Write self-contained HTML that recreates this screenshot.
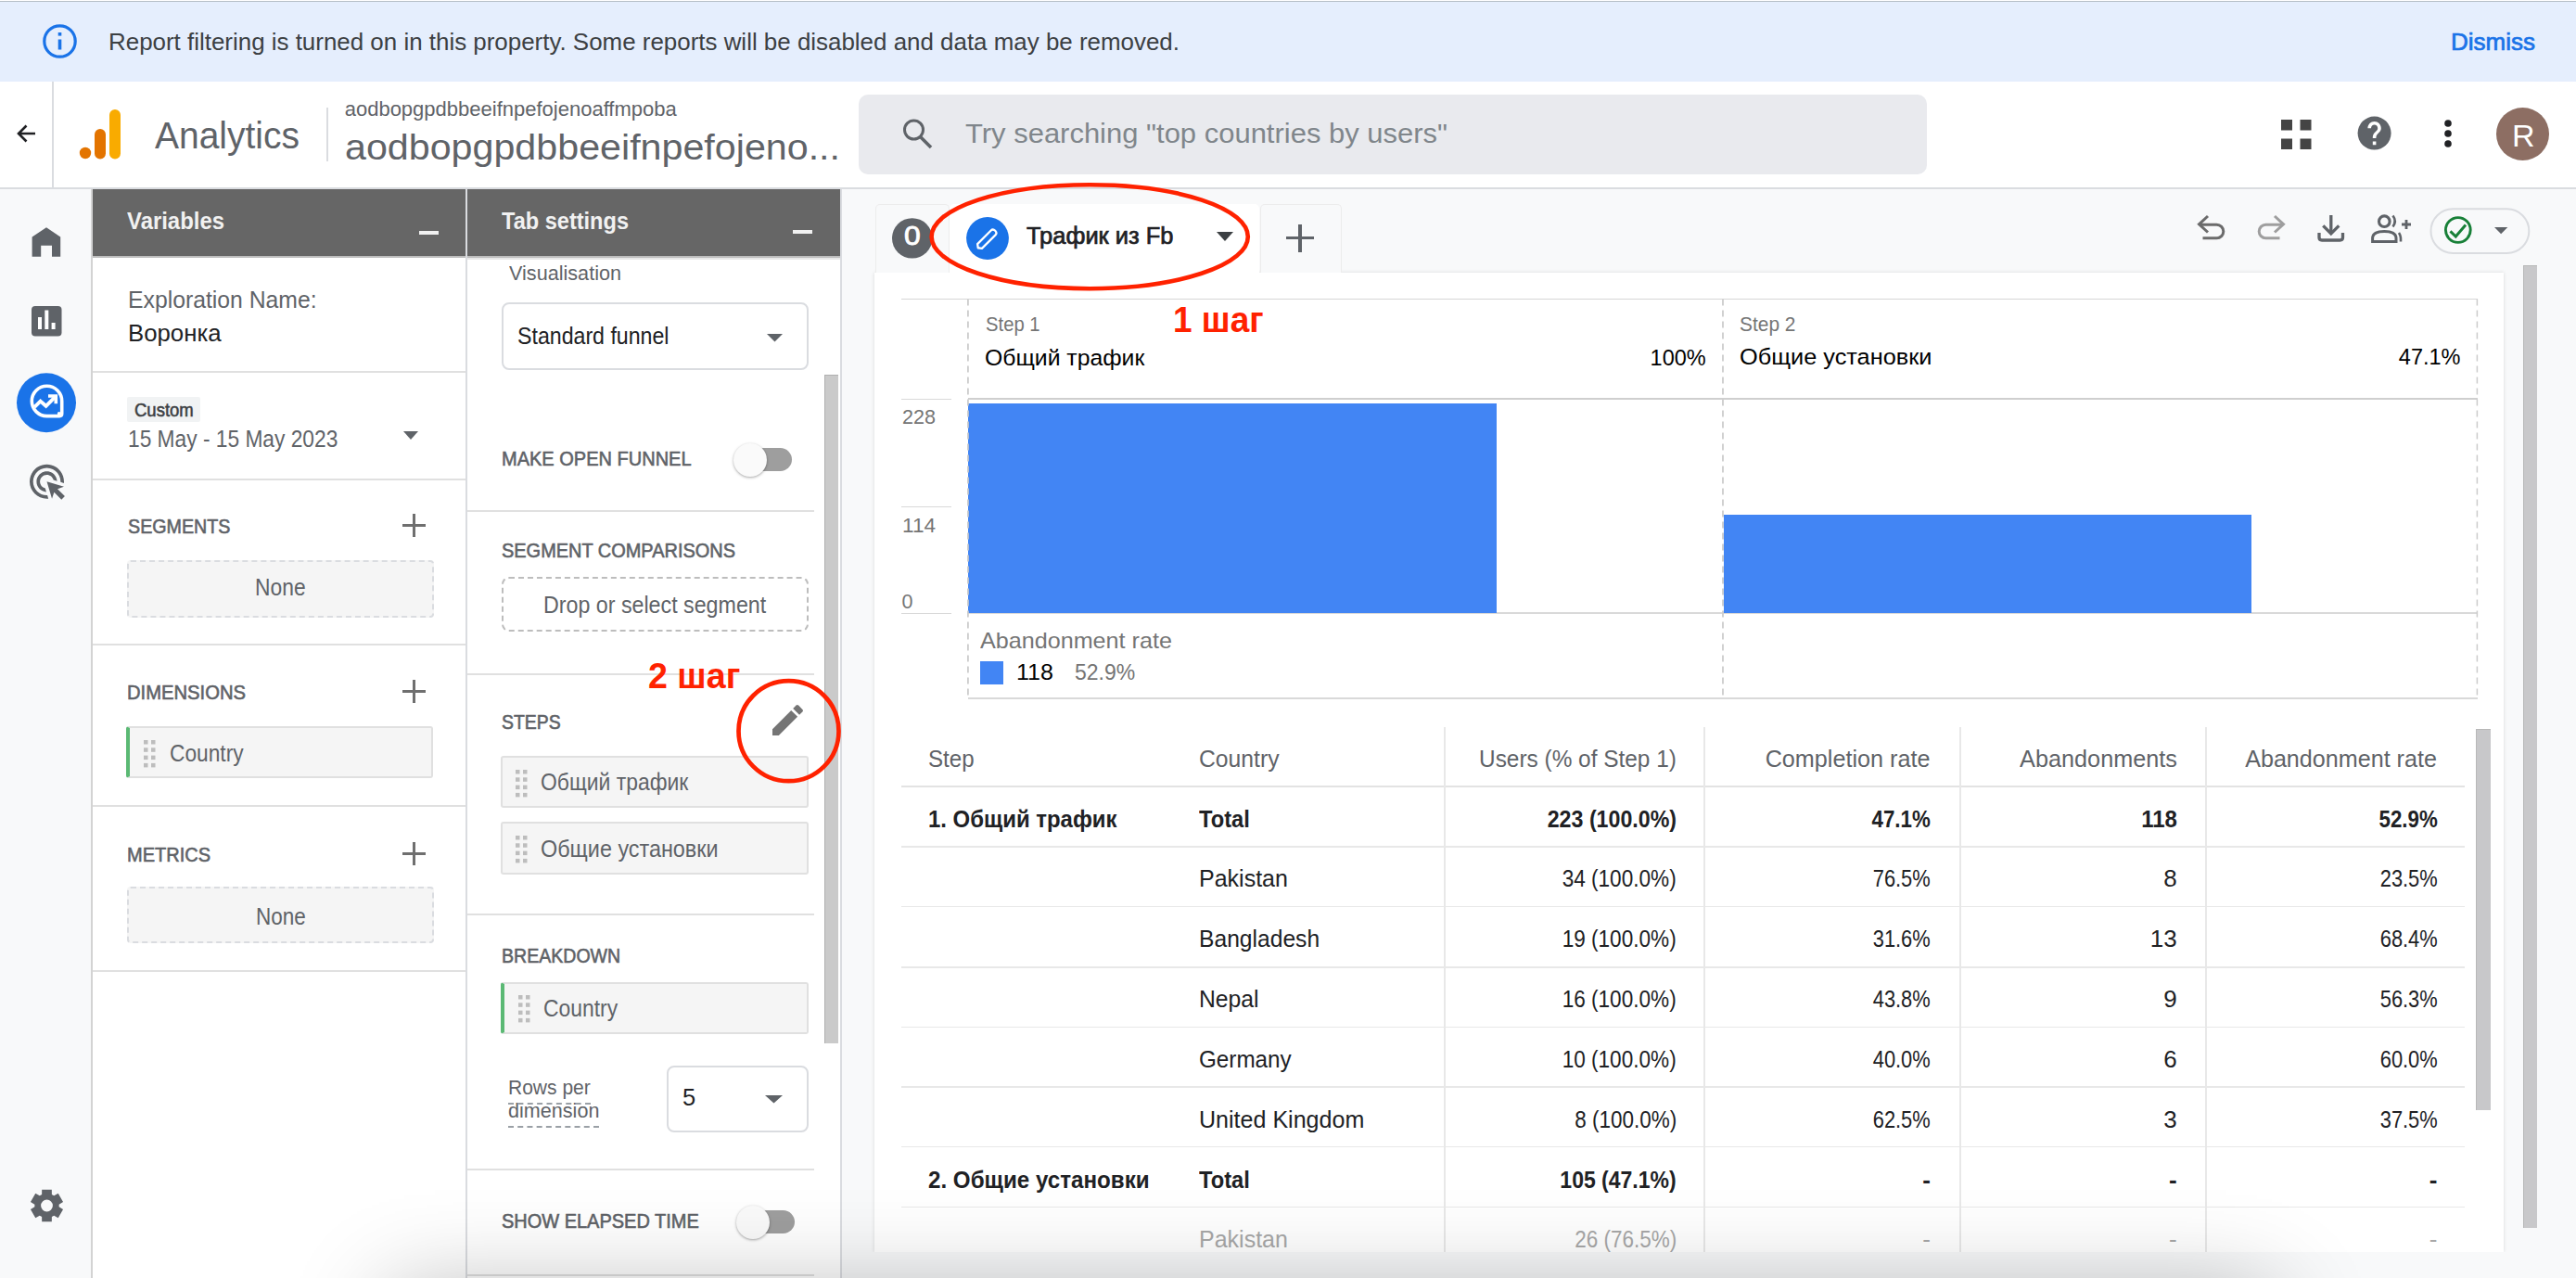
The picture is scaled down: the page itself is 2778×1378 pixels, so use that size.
<!DOCTYPE html>
<html><head><meta charset="utf-8"><style>
html,body{margin:0;padding:0;}
body{width:2778px;height:1378px;position:relative;overflow:hidden;background:#ffffff;font-family:"Liberation Sans", sans-serif;}
span{font-family:"Liberation Sans", sans-serif;}
</style></head><body>
<div style="position:absolute;left:0px;top:0px;width:2778px;height:88px;background:#e5eefd;"></div><div style="position:absolute;left:0px;top:0px;width:2778px;height:1px;background:#ffffff;"></div><div style="position:absolute;left:0px;top:1px;width:2778px;height:1.2px;background:#b5bec7;"></div><div style="position:absolute;left:0px;top:88px;width:2778px;height:114px;background:#ffffff;"></div><div style="position:absolute;left:0px;top:202px;width:2778px;height:2px;background:#dadce0;"></div><div style="position:absolute;left:56px;top:88px;width:2px;height:114px;background:#dadce0;"></div><div style="position:absolute;left:0px;top:204px;width:98px;height:1174px;background:#f8f9fa;"></div><div style="position:absolute;left:98px;top:204px;width:2px;height:1174px;background:#d3d3d3;"></div><div style="position:absolute;left:100px;top:204px;width:402px;height:1174px;background:#ffffff;"></div><div style="position:absolute;left:100px;top:204px;width:402px;height:72px;background:#666666;"></div><div style="position:absolute;left:100px;top:276px;width:402px;height:2px;background:#bebebe;"></div><div style="position:absolute;left:502px;top:204px;width:2px;height:1174px;background:#dadce0;"></div><div style="position:absolute;left:504px;top:204px;width:402px;height:1174px;background:#ffffff;"></div><div style="position:absolute;left:504px;top:204px;width:402px;height:72px;background:#666666;"></div><div style="position:absolute;left:504px;top:276px;width:402px;height:2px;background:#bebebe;"></div><div style="position:absolute;left:504px;top:278px;width:402px;height:1.5px;background:#e8e8e8;"></div><div style="position:absolute;left:906px;top:204px;width:2px;height:1174px;background:#dadce0;"></div><div style="position:absolute;left:908px;top:204px;width:1870px;height:1174px;background:#f8f9fa;"></div><div style="position:absolute;left:943px;top:294px;width:1757px;height:1056px;background:#ffffff;box-shadow:0 0 4px rgba(0,0,0,0.13);clip-path:inset(-10px -10px 0 -10px);"></div><svg style="position:absolute;left:46px;top:26px;overflow:visible" width="37" height="37" viewBox="0 0 37 37"><circle cx="18.5" cy="18.5" r="16.7" fill="none" stroke="#1a73e8" stroke-width="3.2"/><rect x="16.7" y="9" width="3.6" height="3.6" fill="#1a73e8"/><rect x="16.7" y="16.5" width="3.6" height="11" fill="#1a73e8"/></svg><span id="t0" style="position:absolute;left:117px;top:30.77px;font-size:26px;line-height:29.042px;color:#3c4043;font-weight:400;white-space:nowrap;transform:scaleX(0.9969);transform-origin:left top;">Report filtering is turned on in this property. Some reports will be disabled and data may be removed.</span><span id="t1" style="position:absolute;right:44px;top:30.87px;font-size:26px;line-height:29.042px;color:#1a73e8;font-weight:400;white-space:nowrap;-webkit-text-stroke:0.73px #1a73e8;">Dismiss</span><svg style="position:absolute;left:17px;top:133px;overflow:visible" width="22" height="22" viewBox="0 0 22 22"><path d="M21 11H3.5M11.5 2.5L3 11l8.5 8.5" fill="none" stroke="#202124" stroke-width="2.6"/></svg><svg style="position:absolute;left:85px;top:117px;overflow:visible" width="46" height="55" viewBox="0 0 46 55"><circle cx="7" cy="48" r="6.2" fill="#e37400"/><rect x="17" y="22" width="12" height="32.5" rx="6" fill="#e37400"/><rect x="33" y="1" width="12" height="53.5" rx="6" fill="#f9ab00"/></svg><span id="t2" style="position:absolute;left:166.6px;top:123.8px;font-size:40px;line-height:44.68px;color:#5f6368;font-weight:400;white-space:nowrap;transform:scaleX(0.9746);transform-origin:left top;">Analytics</span><div style="position:absolute;left:352px;top:116px;width:2px;height:58px;background:#dadce0;"></div><span id="t3" style="position:absolute;left:371.7px;top:106.09px;font-size:22px;line-height:24.574px;color:#5f6368;font-weight:400;white-space:nowrap;">aodbopgpdbbeeifnpefojenoaffmpoba</span><span id="t4" style="position:absolute;left:371.7px;top:137.61px;font-size:38px;line-height:42.446px;color:#5f6368;font-weight:400;white-space:nowrap;transform:scaleX(1.0846);transform-origin:left top;">aodbopgpdbbeeifnpefojeno...</span><div style="position:absolute;left:926px;top:102px;width:1152px;height:86px;background:#e9eaee;border-radius:10px;"></div><svg style="position:absolute;left:970px;top:126px;overflow:visible" width="38" height="38" viewBox="0 0 38 38"><circle cx="15.5" cy="14" r="10" fill="none" stroke="#5f6368" stroke-width="3"/><path d="M22.5 21.5L34 33" stroke="#5f6368" stroke-width="3.5"/></svg><span id="t5" style="position:absolute;left:1041px;top:127.15px;font-size:30px;line-height:33.51px;color:#80868b;font-weight:400;white-space:nowrap;transform:scaleX(1.0323);transform-origin:left top;">Try searching "top countries by users"</span><svg style="position:absolute;left:2460px;top:129px;overflow:visible" width="33" height="33" viewBox="0 0 33 33"><rect x="0" y="0" width="12" height="11.5" fill="#444"/><rect x="20.5" y="0" width="12" height="11.5" fill="#444"/><rect x="0" y="20.5" width="12" height="11.5" fill="#444"/><rect x="20.5" y="20.5" width="12" height="11.5" fill="#444"/></svg><svg style="position:absolute;left:2539.4px;top:122.4px;overflow:visible" width="43.2" height="43.2" viewBox="0 0 43.2 43.2"><g transform="scale(1.8)"><circle cx="12" cy="12" r="10" fill="#5f6368"/><path d="M13 19h-2v-2h2v2zm2.07-7.75l-.9.92C13.45 12.9 13 13.5 13 15h-2v-.5c0-1.1.45-2.1 1.17-2.83l1.24-1.26c.37-.36.59-.86.59-1.41 0-1.1-.9-2-2-2s-2 .9-2 2H8c0-2.21 1.79-4 4-4s4 1.79 4 4c0 .88-.36 1.68-.93 2.25z" fill="#fff"/></g></svg><svg style="position:absolute;left:2633px;top:129px;overflow:visible" width="14" height="32" viewBox="0 0 14 32"><circle cx="7" cy="4" r="3.8" fill="#202124"/><circle cx="7" cy="15" r="3.8" fill="#202124"/><circle cx="7" cy="26" r="3.8" fill="#202124"/></svg><div style="position:absolute;left:2691.5px;top:116px;width:57px;height:57px;background:#8d6e63;border-radius:50%;"></div><span id="t6" style="position:absolute;left:2720px;top:127.23px;font-size:34px;line-height:37.978px;color:#ffffff;font-weight:400;white-space:nowrap;margin-left:-11px;">R</span><svg style="position:absolute;left:0px;top:0px;overflow:visible" width="98" height="1378" viewBox="0 0 98 1378"><path d="M50 245.3 L65.2 255.6 L65.2 276.7 L56 276.7 L56 264.7 L44.2 264.7 L44.2 276.7 L34.6 276.7 L34.6 255.6 Z" fill="#5f6368"/><rect x="34" y="330" width="32.5" height="32.4" rx="4" fill="#5f6368"/><rect x="41" y="342" width="4" height="13" fill="#fff"/><rect x="48.3" y="334.5" width="4" height="20.5" fill="#fff"/><rect x="55.6" y="348" width="4" height="7" fill="#fff"/><circle cx="50" cy="434.2" r="32" fill="#1a73e8"/><path d="M50.5 448.6 A16.2 16.2 0 1 1 66.7 432.4 L66.7 446.1 Q66.7 448.6 64.2 448.6 Z" fill="none" stroke="#fff" stroke-width="3.6"/><path d="M37.3 438.8 L43.6 432.6 L49.6 437.8 L59.3 428.1" fill="none" stroke="#fff" stroke-width="3.8"/><path d="M52 427 L60.3 427 L60.3 435.2" fill="none" stroke="#fff" stroke-width="3.6"/><circle cx="63.7" cy="445.9" r="1.9" fill="#fff"/><g transform="translate(28.3 497.1) scale(1.85)"><path d="M11.71,17.99C8.53,17.84,6,15.22,6,12c0-3.31,2.69-6,6-6c3.22,0,5.84,2.53,5.99,5.71l-2.1-0.63C15.48,9.31,13.89,8,12,8 c-2.21,0-4,1.79-4,4c0,1.89,1.31,3.48,3.08,3.89L11.71,17.99z M22,12c0,0.3-0.01,0.6-0.04,0.9l-1.97-0.59C20,12.21,20,12.1,20,12 c0-4.42-3.580-8-8-8s-8,3.58-8,8s3.58,8,8,8c0.1,0,0.21,0,0.31-0.01l0.59,1.97C12.6,21.99,12.3,22,12,22C6.48,22,2,17.52,2,12 C2,6.48,6.48,2,12,2S22,6.48,22,12z M18.23,16.26L22,15l-10-3l3,10l1.26-3.77l4.27,4.27l1.97-1.97L18.23,16.26z" fill="#5f6368"/></g><path d="M45.12 1287.95 L45.18 1282.80 L55.82 1282.80 L55.88 1287.95 L58.25 1289.31 L62.73 1286.80 L68.05 1296.01 L63.63 1298.63 L63.63 1301.37 L68.05 1303.99 L62.73 1313.20 L58.25 1310.69 L55.88 1312.05 L55.82 1317.20 L45.18 1317.20 L45.12 1312.05 L42.75 1310.69 L38.27 1313.20 L32.95 1303.99 L37.37 1301.37 L37.37 1298.63 L32.95 1296.01 L38.27 1286.80 L42.75 1289.31 Z M56.90 1300.00 A6.4 6.4 0 1 0 44.10 1300.00 A6.4 6.4 0 1 0 56.90 1300.00 Z" fill="#5f6368" fill-rule="evenodd"/></svg><span id="t7" style="position:absolute;left:137.4px;top:225.375px;font-size:25px;line-height:27.925px;color:#f1f1f1;font-weight:700;white-space:nowrap;transform:scaleX(0.9562);transform-origin:left top;">Variables</span><div style="position:absolute;left:452px;top:249px;width:21px;height:4px;background:#f1f1f1;"></div><span id="t8" style="position:absolute;left:137.8px;top:308.97px;font-size:26px;line-height:29.042px;color:#5f6368;font-weight:400;white-space:nowrap;transform:scaleX(0.9519);transform-origin:left top;">Exploration Name:</span><span id="t9" style="position:absolute;left:137.8px;top:345.223px;font-size:25.5px;line-height:28.483px;color:#202124;font-weight:400;white-space:nowrap;transform:scaleX(1.0106);transform-origin:left top;">Воронка</span><div style="position:absolute;left:100px;top:400px;width:402px;height:2px;background:#e0e0e0;"></div><div style="position:absolute;left:136.5px;top:428px;width:79px;height:27px;background:#f1f3f4;border-radius:2px;"></div><span id="t10" style="position:absolute;left:144.5px;top:430.5px;font-size:20px;line-height:22.34px;color:#3c4043;font-weight:400;white-space:nowrap;-webkit-text-stroke:0.56px #3c4043;transform:scaleX(0.9259);transform-origin:left top;">Custom</span><span id="t11" style="position:absolute;left:137.7px;top:459.875px;font-size:25px;line-height:27.925px;color:#5f6368;font-weight:400;white-space:nowrap;transform:scaleX(0.9097);transform-origin:left top;">15 May - 15 May 2023</span><svg style="position:absolute;left:435px;top:465px;overflow:visible" width="16" height="9" viewBox="0 0 16 9"><path d="M0 0 L16 0 L8 9 Z" fill="#5f6368"/></svg><div style="position:absolute;left:100px;top:516px;width:402px;height:2px;background:#e0e0e0;"></div><span id="t12" style="position:absolute;left:137.7px;top:556.39px;font-size:22px;line-height:24.574px;color:#5f6368;font-weight:400;white-space:nowrap;-webkit-text-stroke:0.62px #5f6368;transform:scaleX(0.8950);transform-origin:left top;">SEGMENTS</span><div style="position:absolute;left:433.9px;top:565.0px;width:25px;height:3.0px;background:#6f6f6f;"></div><div style="position:absolute;left:444.9px;top:554.0px;width:3.0px;height:25px;background:#6f6f6f;"></div><div style="position:absolute;left:136.5px;top:604px;width:331px;height:62px;background:#f5f5f5;border:2px dashed #dadce0;border-radius:4px;box-sizing:border-box;"></div><span id="t13" style="position:absolute;left:275px;top:618.923px;font-size:25.5px;line-height:28.483px;color:#5f6368;font-weight:400;white-space:nowrap;transform:scaleX(0.8955);transform-origin:left top;">None</span><div style="position:absolute;left:100px;top:694px;width:402px;height:2px;background:#e0e0e0;"></div><span id="t14" style="position:absolute;left:137px;top:734.69px;font-size:22px;line-height:24.574px;color:#5f6368;font-weight:400;white-space:nowrap;-webkit-text-stroke:0.62px #5f6368;transform:scaleX(0.9185);transform-origin:left top;">DIMENSIONS</span><div style="position:absolute;left:433.5px;top:743.5px;width:25px;height:3.0px;background:#6f6f6f;"></div><div style="position:absolute;left:444.5px;top:732.5px;width:3.0px;height:25px;background:#6f6f6f;"></div><div style="position:absolute;left:136px;top:782.6px;width:331px;height:56.4px;background:#f5f5f5;border:2px solid #e0e0e0;border-left:4px solid #5bb974;border-radius:3px;box-sizing:border-box;"></div><svg style="position:absolute;left:155px;top:797.6px;overflow:visible" width="13" height="30" viewBox="0 0 13 30"><rect x="0" y="0.0" width="4.5" height="4.5" fill="#bdbdbd"/><rect x="8" y="0.0" width="4.5" height="4.5" fill="#bdbdbd"/><rect x="0" y="8.3" width="4.5" height="4.5" fill="#bdbdbd"/><rect x="8" y="8.3" width="4.5" height="4.5" fill="#bdbdbd"/><rect x="0" y="16.6" width="4.5" height="4.5" fill="#bdbdbd"/><rect x="8" y="16.6" width="4.5" height="4.5" fill="#bdbdbd"/><rect x="0" y="24.900000000000002" width="4.5" height="4.5" fill="#bdbdbd"/><rect x="8" y="24.900000000000002" width="4.5" height="4.5" fill="#bdbdbd"/></svg><span id="t15" style="position:absolute;left:183px;top:797.722px;font-size:25.5px;line-height:28.483px;color:#5f6368;font-weight:400;white-space:nowrap;transform:scaleX(0.8914);transform-origin:left top;">Country</span><div style="position:absolute;left:100px;top:868px;width:402px;height:2px;background:#e0e0e0;"></div><span id="t16" style="position:absolute;left:137px;top:909.59px;font-size:22px;line-height:24.574px;color:#5f6368;font-weight:400;white-space:nowrap;-webkit-text-stroke:0.62px #5f6368;transform:scaleX(0.9091);transform-origin:left top;">METRICS</span><div style="position:absolute;left:433.5px;top:919.0px;width:25px;height:3.0px;background:#6f6f6f;"></div><div style="position:absolute;left:444.5px;top:908.0px;width:3.0px;height:25px;background:#6f6f6f;"></div><div style="position:absolute;left:136.5px;top:956px;width:331px;height:61px;background:#f5f5f5;border:2px dashed #dadce0;border-radius:4px;box-sizing:border-box;"></div><span id="t17" style="position:absolute;left:275.6px;top:973.722px;font-size:25.5px;line-height:28.483px;color:#5f6368;font-weight:400;white-space:nowrap;transform:scaleX(0.8824);transform-origin:left top;">None</span><div style="position:absolute;left:100px;top:1045.5px;width:402px;height:2px;background:#e0e0e0;"></div><span id="t18" style="position:absolute;left:541px;top:225.175px;font-size:25px;line-height:27.925px;color:#f1f1f1;font-weight:700;white-space:nowrap;transform:scaleX(0.9423);transform-origin:left top;">Tab settings</span><div style="position:absolute;left:855px;top:248px;width:21px;height:4px;background:#f1f1f1;"></div><span id="t19" style="position:absolute;left:548.6px;top:282.137px;font-size:22.5px;line-height:25.133px;color:#5f6368;font-weight:400;white-space:nowrap;transform:scaleX(0.9609);transform-origin:left top;">Visualisation</span><div style="position:absolute;left:540.7px;top:326.4px;width:331px;height:72.6px;background:#fff;border:2px solid #dadce0;border-radius:8px;box-sizing:border-box;"></div><span id="t20" style="position:absolute;left:557.8px;top:347.623px;font-size:25.5px;line-height:28.483px;color:#202124;font-weight:400;white-space:nowrap;transform:scaleX(0.9080);transform-origin:left top;">Standard funnel</span><svg style="position:absolute;left:827px;top:359.5px;overflow:visible" width="17" height="8.5" viewBox="0 0 17 8.5"><path d="M0 0 L17 0 L8.5 8.5 Z" fill="#5f6368"/></svg><div style="position:absolute;left:889px;top:404.2px;width:15px;height:721px;background:#cacaca;border-left:1.5px solid #b0b0b0;border-top:1.5px solid #b0b0b0;box-sizing:border-box;"></div><span id="t21" style="position:absolute;left:540.7px;top:483.09px;font-size:22px;line-height:24.574px;color:#5f6368;font-weight:400;white-space:nowrap;-webkit-text-stroke:0.62px #5f6368;transform:scaleX(0.9096);transform-origin:left top;">MAKE OPEN FUNNEL</span><div style="position:absolute;left:805px;top:483px;width:49px;height:25px;background:#9e9e9e;border-radius:13px;"></div><div style="position:absolute;left:791px;top:477.5px;width:36px;height:36px;background:#fafafa;border-radius:50%;box-shadow:0 1px 3px rgba(0,0,0,0.35);"></div><div style="position:absolute;left:504px;top:550px;width:374px;height:2px;background:#e0e0e0;"></div><span id="t22" style="position:absolute;left:541px;top:582.09px;font-size:22px;line-height:24.574px;color:#5f6368;font-weight:400;white-space:nowrap;-webkit-text-stroke:0.62px #5f6368;transform:scaleX(0.9068);transform-origin:left top;">SEGMENT COMPARISONS</span><div style="position:absolute;left:540.7px;top:622px;width:331px;height:58.6px;background:#fff;border:2px dashed #bdbdbd;border-radius:8px;box-sizing:border-box;"></div><span id="t23" style="position:absolute;left:585.7px;top:637.623px;font-size:25.5px;line-height:28.483px;color:#5f6368;font-weight:400;white-space:nowrap;transform:scaleX(0.9111);transform-origin:left top;">Drop or select segment</span><div style="position:absolute;left:504px;top:726px;width:374px;height:2px;background:#e0e0e0;"></div><span id="t24" style="position:absolute;left:541px;top:766.99px;font-size:22px;line-height:24.574px;color:#5f6368;font-weight:400;white-space:nowrap;-webkit-text-stroke:0.62px #5f6368;transform:scaleX(0.8816);transform-origin:left top;">STEPS</span><div style="position:absolute;left:540px;top:814.9px;width:331.6px;height:56.5px;background:#f5f5f5;border:2px solid #e0e0e0;border-radius:3px;box-sizing:border-box;"></div><svg style="position:absolute;left:555.5px;top:829.5px;overflow:visible" width="13" height="30" viewBox="0 0 13 30"><rect x="0" y="0.0" width="4.5" height="4.5" fill="#bdbdbd"/><rect x="8" y="0.0" width="4.5" height="4.5" fill="#bdbdbd"/><rect x="0" y="8.3" width="4.5" height="4.5" fill="#bdbdbd"/><rect x="8" y="8.3" width="4.5" height="4.5" fill="#bdbdbd"/><rect x="0" y="16.6" width="4.5" height="4.5" fill="#bdbdbd"/><rect x="8" y="16.6" width="4.5" height="4.5" fill="#bdbdbd"/><rect x="0" y="24.900000000000002" width="4.5" height="4.5" fill="#bdbdbd"/><rect x="8" y="24.900000000000002" width="4.5" height="4.5" fill="#bdbdbd"/></svg><span id="t25" style="position:absolute;left:582.6px;top:829.423px;font-size:25.5px;line-height:28.483px;color:#5f6368;font-weight:400;white-space:nowrap;transform:scaleX(0.8979);transform-origin:left top;">Общий трафик</span><div style="position:absolute;left:540px;top:886.4px;width:331.6px;height:56.6px;background:#f5f5f5;border:2px solid #e0e0e0;border-radius:3px;box-sizing:border-box;"></div><svg style="position:absolute;left:555.5px;top:901px;overflow:visible" width="13" height="30" viewBox="0 0 13 30"><rect x="0" y="0.0" width="4.5" height="4.5" fill="#bdbdbd"/><rect x="8" y="0.0" width="4.5" height="4.5" fill="#bdbdbd"/><rect x="0" y="8.3" width="4.5" height="4.5" fill="#bdbdbd"/><rect x="8" y="8.3" width="4.5" height="4.5" fill="#bdbdbd"/><rect x="0" y="16.6" width="4.5" height="4.5" fill="#bdbdbd"/><rect x="8" y="16.6" width="4.5" height="4.5" fill="#bdbdbd"/><rect x="0" y="24.900000000000002" width="4.5" height="4.5" fill="#bdbdbd"/><rect x="8" y="24.900000000000002" width="4.5" height="4.5" fill="#bdbdbd"/></svg><span id="t26" style="position:absolute;left:582.6px;top:900.923px;font-size:25.5px;line-height:28.483px;color:#5f6368;font-weight:400;white-space:nowrap;transform:scaleX(0.9170);transform-origin:left top;">Общие установки</span><div style="position:absolute;left:504px;top:985px;width:374px;height:2px;background:#e0e0e0;"></div><span id="t27" style="position:absolute;left:541px;top:1018.89px;font-size:22px;line-height:24.574px;color:#5f6368;font-weight:400;white-space:nowrap;-webkit-text-stroke:0.62px #5f6368;transform:scaleX(0.8887);transform-origin:left top;">BREAKDOWN</span><div style="position:absolute;left:540px;top:1058.7px;width:331.6px;height:56.5px;background:#f5f5f5;border:2px solid #e0e0e0;border-left:4px solid #5bb974;border-radius:3px;box-sizing:border-box;"></div><svg style="position:absolute;left:558.5px;top:1073px;overflow:visible" width="13" height="30" viewBox="0 0 13 30"><rect x="0" y="0.0" width="4.5" height="4.5" fill="#bdbdbd"/><rect x="8" y="0.0" width="4.5" height="4.5" fill="#bdbdbd"/><rect x="0" y="8.3" width="4.5" height="4.5" fill="#bdbdbd"/><rect x="8" y="8.3" width="4.5" height="4.5" fill="#bdbdbd"/><rect x="0" y="16.6" width="4.5" height="4.5" fill="#bdbdbd"/><rect x="8" y="16.6" width="4.5" height="4.5" fill="#bdbdbd"/><rect x="0" y="24.900000000000002" width="4.5" height="4.5" fill="#bdbdbd"/><rect x="8" y="24.900000000000002" width="4.5" height="4.5" fill="#bdbdbd"/></svg><span id="t28" style="position:absolute;left:585.8px;top:1073.322px;font-size:25.5px;line-height:28.483px;color:#5f6368;font-weight:400;white-space:nowrap;transform:scaleX(0.8981);transform-origin:left top;">Country</span><span id="t29" style="position:absolute;left:547.6px;top:1160.438px;font-size:22.5px;line-height:25.133px;color:#5f6368;font-weight:400;white-space:nowrap;transform:scaleX(0.9343);transform-origin:left top;">Rows per</span><span id="t30" style="position:absolute;left:547.6px;top:1185.237px;font-size:22.5px;line-height:25.133px;color:#5f6368;font-weight:400;white-space:nowrap;transform:scaleX(0.9594);transform-origin:left top;">dimension</span><div style="position:absolute;left:547.6px;top:1189px;width:89px;height:0px;border-top:2px dashed #9aa0a6;"></div><div style="position:absolute;left:547.6px;top:1214px;width:98.4px;height:0px;border-top:2px dashed #9aa0a6;"></div><div style="position:absolute;left:718.7px;top:1148.6px;width:153px;height:72.6px;background:#fff;border:2px solid #dadce0;border-radius:8px;box-sizing:border-box;"></div><span id="t31" style="position:absolute;left:736px;top:1168.522px;font-size:25.5px;line-height:28.483px;color:#202124;font-weight:400;white-space:nowrap;">5</span><svg style="position:absolute;left:825px;top:1181px;overflow:visible" width="19" height="8.5" viewBox="0 0 19 8.5"><path d="M0 0 L19 0 L9.5 8.5 Z" fill="#5f6368"/></svg><div style="position:absolute;left:504px;top:1259.5px;width:374px;height:2px;background:#e0e0e0;"></div><span id="t32" style="position:absolute;left:541px;top:1305.09px;font-size:22px;line-height:24.574px;color:#5f6368;font-weight:400;white-space:nowrap;-webkit-text-stroke:0.62px #5f6368;transform:scaleX(0.9078);transform-origin:left top;">SHOW ELAPSED TIME</span><div style="position:absolute;left:807.5px;top:1305px;width:49px;height:25px;background:#9e9e9e;border-radius:13px;"></div><div style="position:absolute;left:793.5px;top:1299.5px;width:36px;height:36px;background:#fafafa;border-radius:50%;box-shadow:0 1px 3px rgba(0,0,0,0.35);"></div><div style="position:absolute;left:504px;top:1374px;width:374px;height:2px;background:#e0e0e0;"></div><div style="position:absolute;left:943.8px;top:220px;width:80px;height:74px;background:#f8f9fa;border:1px solid #ececec;border-bottom:none;border-radius:5px 5px 0 0;box-sizing:border-box;"></div><svg style="position:absolute;left:961.8px;top:235px;overflow:visible" width="44" height="44" viewBox="0 0 44 44"><circle cx="21.7" cy="21.9" r="21.7" fill="#5f6368"/></svg><span id="t33" style="position:absolute;left:975px;top:237.755px;font-size:29px;line-height:32.393px;color:#ffffff;font-weight:400;white-space:nowrap;-webkit-text-stroke:0.81px #ffffff;transform:scaleX(1.0966);transform-origin:left top;">0</span><div style="position:absolute;left:1023.8px;top:220px;width:334.5px;height:75px;background:#ffffff;border-radius:5px 5px 0 0;"></div><svg style="position:absolute;left:1042px;top:233.7px;overflow:visible" width="46" height="46" viewBox="0 0 46 46"><circle cx="23" cy="23" r="22.9" fill="#1a73e8"/><g transform="translate(23 23) rotate(-45)"><path d="M-12 -3.4 L8.6 -3.4 Q11.6 -3.4 11.6 0 Q11.6 3.4 8.6 3.4 L-12 3.4 L-14.5 0 Z" fill="none" stroke="#fff" stroke-width="2.3" stroke-linejoin="round"/></g></svg><span id="t34" style="position:absolute;left:1106.5px;top:241.175px;font-size:25px;line-height:27.925px;color:#202124;font-weight:400;white-space:nowrap;-webkit-text-stroke:0.70px #202124;transform:scaleX(1.0184);transform-origin:left top;">Трафик из Fb</span><svg style="position:absolute;left:1312px;top:250px;overflow:visible" width="18" height="10" viewBox="0 0 18 10"><path d="M0 0 L18 0 L9 10 Z" fill="#3c4043"/></svg><div style="position:absolute;left:1359px;top:220px;width:88.4px;height:74px;background:#f8f9fa;border:1px solid #ececec;border-bottom:none;border-radius:5px 5px 0 0;box-sizing:border-box;"></div><div style="position:absolute;left:1387.0px;top:254.9px;width:30px;height:3.2px;background:#5f6368;"></div><div style="position:absolute;left:1400.4px;top:241.5px;width:3.2px;height:30px;background:#5f6368;"></div><svg style="position:absolute;left:2360px;top:220px;overflow:visible" width="380" height="60" viewBox="0 0 380 60"><path d="M21 13 L11.5 21.8 L21 30.5" fill="none" stroke="#6b6b6b" stroke-width="3"/><path d="M12.5 22.2 H30.5 A7.3 7.3 0 0 1 30.5 36.8 H15.5" fill="none" stroke="#6b6b6b" stroke-width="3"/><path d="M93 13 L102.5 21.8 L93 30.5" fill="none" stroke="#9e9e9e" stroke-width="3"/><path d="M101.5 22.2 H83.5 A7.3 7.3 0 0 0 83.5 36.8 H98.5" fill="none" stroke="#9e9e9e" stroke-width="3"/><path d="M153.8 12 V32" fill="none" stroke="#5f6368" stroke-width="3.3"/><path d="M145.3 23.4 L153.8 32 L162.3 23.4" fill="none" stroke="#5f6368" stroke-width="3.3"/><path d="M141 31 V36 Q141 39 144 39 H163.5 Q166.5 39 166.5 36 V31" fill="none" stroke="#5f6368" stroke-width="3.3"/><circle cx="211.3" cy="18.7" r="5.8" fill="none" stroke="#5f6368" stroke-width="3.1"/><path d="M198.6 40.5 V37 Q198.6 29.5 211.3 29.5 Q224 29.5 224 37 V40.5 Z" fill="none" stroke="#5f6368" stroke-width="3"/><path d="M220.5 12.5 Q225 18.5 220.5 24.5" fill="none" stroke="#5f6368" stroke-width="2.6"/><path d="M227 31 Q229 34 229 37.5 V40.5" fill="none" stroke="#5f6368" stroke-width="2.6"/><path d="M230 22 H240 M235 17 V27" fill="none" stroke="#5f6368" stroke-width="2.8"/><rect x="261.5" y="5.3" width="105.8" height="47.6" rx="23.8" fill="none" stroke="#dadce0" stroke-width="2"/><circle cx="290.8" cy="28" r="13.4" fill="none" stroke="#188038" stroke-width="2.9"/><path d="M282.5 29.4 L288.3 35 L299 22.6" fill="none" stroke="#188038" stroke-width="3"/><path d="M330 25 L344.3 25 L337.15 32.2 Z" fill="#5f6368"/></svg><div style="position:absolute;left:972px;top:321.6px;width:1699.6px;height:1.6px;background:#d6d6d6;"></div><div style="position:absolute;left:972px;top:429.5px;width:54px;height:1.5px;background:#d9d9d9;"></div><div style="position:absolute;left:1044px;top:429px;width:1627.6px;height:2.2px;background:#cfcfcf;"></div><div style="position:absolute;left:972px;top:545.5px;width:54px;height:1.5px;background:#d9d9d9;"></div><div style="position:absolute;left:972px;top:660.5px;width:54px;height:1.5px;background:#d9d9d9;"></div><div style="position:absolute;left:1044px;top:660.3px;width:1627.6px;height:1.5px;background:#d9d9d9;"></div><div style="position:absolute;left:1044px;top:752.3px;width:1627.6px;height:1.8px;background:#d9d9d9;"></div><div style="position:absolute;left:1044.2px;top:434.8px;width:569.4px;height:226px;background:#4285f4;"></div><div style="position:absolute;left:1858.5px;top:554.9px;width:569.4px;height:105.9px;background:#4285f4;"></div><svg style="position:absolute;left:0px;top:0px;overflow:visible" width="2778" height="1378" viewBox="0 0 2778 1378"><line x1="1043.9" y1="322.5" x2="1043.9" y2="750.5" stroke="#cccccc" stroke-width="1.8" stroke-dasharray="7 5"/><line x1="1858" y1="322.5" x2="1858" y2="750.5" stroke="#cccccc" stroke-width="1.8" stroke-dasharray="7 5"/><line x1="2671.4" y1="322.5" x2="2671.4" y2="750.5" stroke="#cccccc" stroke-width="1.5" stroke-dasharray="7 5"/></svg><span id="t35" style="position:absolute;left:1062.7px;top:338.243px;font-size:21.5px;line-height:24.015px;color:#757575;font-weight:400;white-space:nowrap;transform:scaleX(0.9425);transform-origin:left top;">Step 1</span><span id="t36" style="position:absolute;left:1062.3px;top:371.527px;font-size:24.5px;line-height:27.366px;color:#000000;font-weight:400;white-space:nowrap;transform:scaleX(1.0107);transform-origin:left top;">Общий трафик</span><span id="t37" style="position:absolute;right:938.5999999999999px;top:371.527px;font-size:24.5px;line-height:27.366px;color:#000000;font-weight:400;white-space:nowrap;transform:scaleX(0.9590);transform-origin:right top;">100%</span><span id="t38" style="position:absolute;left:1876px;top:338.043px;font-size:21.5px;line-height:24.015px;color:#757575;font-weight:400;white-space:nowrap;transform:scaleX(0.9731);transform-origin:left top;">Step 2</span><span id="t39" style="position:absolute;left:1876px;top:371.327px;font-size:24.5px;line-height:27.366px;color:#000000;font-weight:400;white-space:nowrap;transform:scaleX(1.0331);transform-origin:left top;">Общие установки</span><span id="t40" style="position:absolute;right:124.69999999999982px;top:371.327px;font-size:24.5px;line-height:27.366px;color:#000000;font-weight:400;white-space:nowrap;transform:scaleX(0.9587);transform-origin:right top;">47.1%</span><span id="t41" style="position:absolute;left:972.5px;top:438.243px;font-size:21.5px;line-height:24.015px;color:#757575;font-weight:400;white-space:nowrap;transform:scaleX(1.0035);transform-origin:left top;">228</span><span id="t42" style="position:absolute;left:972.5px;top:554.543px;font-size:21.5px;line-height:24.015px;color:#757575;font-weight:400;white-space:nowrap;transform:scaleX(1.0501);transform-origin:left top;">114</span><span id="t43" style="position:absolute;left:972.5px;top:636.543px;font-size:21.5px;line-height:24.015px;color:#757575;font-weight:400;white-space:nowrap;">0</span><span id="t44" style="position:absolute;left:1057.4px;top:677.78px;font-size:24px;line-height:26.808px;color:#757575;font-weight:400;white-space:nowrap;transform:scaleX(1.0477);transform-origin:left top;">Abandonment rate</span><div style="position:absolute;left:1056.7px;top:713.3px;width:25px;height:24.7px;background:#4285f4;"></div><span id="t45" style="position:absolute;left:1095.8px;top:712.48px;font-size:24px;line-height:26.808px;color:#000000;font-weight:400;white-space:nowrap;transform:scaleX(1.0427);transform-origin:left top;">118</span><span id="t46" style="position:absolute;left:1158.8px;top:712.48px;font-size:24px;line-height:26.808px;color:#757575;font-weight:400;white-space:nowrap;transform:scaleX(0.9579);transform-origin:left top;">52.9%</span><div style="position:absolute;left:972px;top:847px;width:1686px;height:2.2px;background:#e3e3e3;"></div><div style="position:absolute;left:972px;top:912.1px;width:1686px;height:1.6px;background:#e8e8e8;"></div><div style="position:absolute;left:972px;top:976.6px;width:1686px;height:1.6px;background:#e8e8e8;"></div><div style="position:absolute;left:972px;top:1042.1000000000001px;width:1686px;height:1.6px;background:#e8e8e8;"></div><div style="position:absolute;left:972px;top:1106.7px;width:1686px;height:1.6px;background:#e8e8e8;"></div><div style="position:absolute;left:972px;top:1171.2px;width:1686px;height:1.6px;background:#e8e8e8;"></div><div style="position:absolute;left:972px;top:1235.8px;width:1686px;height:1.6px;background:#e8e8e8;"></div><div style="position:absolute;left:972px;top:1300.8px;width:1686px;height:1.6px;background:#e8e8e8;"></div><div style="position:absolute;left:1556.5px;top:783.7px;width:2px;height:566px;background:#e8e8e8;"></div><div style="position:absolute;left:1837.2px;top:783.7px;width:2px;height:566px;background:#e8e8e8;"></div><div style="position:absolute;left:2112.7px;top:783.7px;width:2px;height:566px;background:#e8e8e8;"></div><div style="position:absolute;left:2378px;top:783.7px;width:2px;height:566px;background:#e8e8e8;"></div><span id="t47" style="position:absolute;left:1000.8px;top:804.17px;font-size:26px;line-height:29.042px;color:#5f6368;font-weight:400;white-space:nowrap;transform:scaleX(0.9271);transform-origin:left top;">Step</span><span id="t48" style="position:absolute;left:1293.2px;top:804.17px;font-size:26px;line-height:29.042px;color:#5f6368;font-weight:400;white-space:nowrap;transform:scaleX(0.9512);transform-origin:left top;">Country</span><span id="t49" style="position:absolute;right:970.2px;top:804.17px;font-size:26px;line-height:29.042px;color:#5f6368;font-weight:400;white-space:nowrap;transform:scaleX(0.9380);transform-origin:right top;">Users (% of Step 1)</span><span id="t50" style="position:absolute;right:696.0999999999999px;top:804.17px;font-size:26px;line-height:29.042px;color:#5f6368;font-weight:400;white-space:nowrap;transform:scaleX(0.9692);transform-origin:right top;">Completion rate</span><span id="t51" style="position:absolute;right:430.4000000000001px;top:804.17px;font-size:26px;line-height:29.042px;color:#5f6368;font-weight:400;white-space:nowrap;transform:scaleX(0.9708);transform-origin:right top;">Abandonments</span><span id="t52" style="position:absolute;right:149.69999999999982px;top:804.17px;font-size:26px;line-height:29.042px;color:#5f6368;font-weight:400;white-space:nowrap;transform:scaleX(0.9666);transform-origin:right top;">Abandonment rate</span><span id="t53" style="position:absolute;left:1000.8px;top:868.77px;font-size:26px;line-height:29.042px;color:#202124;font-weight:700;white-space:nowrap;transform:scaleX(0.9202);transform-origin:left top;">1. Общий трафик</span><span id="t54" style="position:absolute;left:1293.2px;top:868.77px;font-size:26px;line-height:29.042px;color:#202124;font-weight:700;white-space:nowrap;transform:scaleX(0.9105);transform-origin:left top;">Total</span><span id="t55" style="position:absolute;right:970.2px;top:868.77px;font-size:26px;line-height:29.042px;color:#202124;font-weight:700;white-space:nowrap;transform:scaleX(0.8930);transform-origin:right top;">223 (100.0%)</span><span id="t56" style="position:absolute;right:696.0999999999999px;top:868.77px;font-size:26px;line-height:29.042px;color:#202124;font-weight:700;white-space:nowrap;transform:scaleX(0.8571);transform-origin:right top;">47.1%</span><span id="t57" style="position:absolute;right:430.4000000000001px;top:868.77px;font-size:26px;line-height:29.042px;color:#202124;font-weight:700;white-space:nowrap;transform:scaleX(0.9248);transform-origin:right top;">118</span><span id="t58" style="position:absolute;right:149.69999999999982px;top:868.77px;font-size:26px;line-height:29.042px;color:#202124;font-weight:700;white-space:nowrap;transform:scaleX(0.8571);transform-origin:right top;">52.9%</span><span id="t59" style="position:absolute;left:1293.2px;top:933.27px;font-size:26px;line-height:29.042px;color:#202124;font-weight:400;white-space:nowrap;transform:scaleX(0.9616);transform-origin:left top;">Pakistan</span><span id="t60" style="position:absolute;right:970.2px;top:933.27px;font-size:26px;line-height:29.042px;color:#202124;font-weight:400;white-space:nowrap;transform:scaleX(0.8683);transform-origin:right top;">34 (100.0%)</span><span id="t61" style="position:absolute;right:696.0999999999999px;top:933.27px;font-size:26px;line-height:29.042px;color:#202124;font-weight:400;white-space:nowrap;transform:scaleX(0.8409);transform-origin:right top;">76.5%</span><span id="t62" style="position:absolute;right:430.4000000000001px;top:933.27px;font-size:26px;line-height:29.042px;color:#202124;font-weight:400;white-space:nowrap;">8</span><span id="t63" style="position:absolute;right:149.69999999999982px;top:933.27px;font-size:26px;line-height:29.042px;color:#202124;font-weight:400;white-space:nowrap;transform:scaleX(0.8409);transform-origin:right top;">23.5%</span><span id="t64" style="position:absolute;left:1293.2px;top:998.37px;font-size:26px;line-height:29.042px;color:#202124;font-weight:400;white-space:nowrap;transform:scaleX(0.9473);transform-origin:left top;">Bangladesh</span><span id="t65" style="position:absolute;right:970.2px;top:998.37px;font-size:26px;line-height:29.042px;color:#202124;font-weight:400;white-space:nowrap;transform:scaleX(0.8683);transform-origin:right top;">19 (100.0%)</span><span id="t66" style="position:absolute;right:696.0999999999999px;top:998.37px;font-size:26px;line-height:29.042px;color:#202124;font-weight:400;white-space:nowrap;transform:scaleX(0.8409);transform-origin:right top;">31.6%</span><span id="t67" style="position:absolute;right:430.4000000000001px;top:998.37px;font-size:26px;line-height:29.042px;color:#202124;font-weight:400;white-space:nowrap;">13</span><span id="t68" style="position:absolute;right:149.69999999999982px;top:998.37px;font-size:26px;line-height:29.042px;color:#202124;font-weight:400;white-space:nowrap;transform:scaleX(0.8409);transform-origin:right top;">68.4%</span><span id="t69" style="position:absolute;left:1293.2px;top:1062.87px;font-size:26px;line-height:29.042px;color:#202124;font-weight:400;white-space:nowrap;transform:scaleX(0.9509);transform-origin:left top;">Nepal</span><span id="t70" style="position:absolute;right:970.2px;top:1062.87px;font-size:26px;line-height:29.042px;color:#202124;font-weight:400;white-space:nowrap;transform:scaleX(0.8683);transform-origin:right top;">16 (100.0%)</span><span id="t71" style="position:absolute;right:696.0999999999999px;top:1062.87px;font-size:26px;line-height:29.042px;color:#202124;font-weight:400;white-space:nowrap;transform:scaleX(0.8409);transform-origin:right top;">43.8%</span><span id="t72" style="position:absolute;right:430.4000000000001px;top:1062.87px;font-size:26px;line-height:29.042px;color:#202124;font-weight:400;white-space:nowrap;">9</span><span id="t73" style="position:absolute;right:149.69999999999982px;top:1062.87px;font-size:26px;line-height:29.042px;color:#202124;font-weight:400;white-space:nowrap;transform:scaleX(0.8409);transform-origin:right top;">56.3%</span><span id="t74" style="position:absolute;left:1293.2px;top:1128.47px;font-size:26px;line-height:29.042px;color:#202124;font-weight:400;white-space:nowrap;transform:scaleX(0.9325);transform-origin:left top;">Germany</span><span id="t75" style="position:absolute;right:970.2px;top:1128.47px;font-size:26px;line-height:29.042px;color:#202124;font-weight:400;white-space:nowrap;transform:scaleX(0.8683);transform-origin:right top;">10 (100.0%)</span><span id="t76" style="position:absolute;right:696.0999999999999px;top:1128.47px;font-size:26px;line-height:29.042px;color:#202124;font-weight:400;white-space:nowrap;transform:scaleX(0.8409);transform-origin:right top;">40.0%</span><span id="t77" style="position:absolute;right:430.4000000000001px;top:1128.47px;font-size:26px;line-height:29.042px;color:#202124;font-weight:400;white-space:nowrap;">6</span><span id="t78" style="position:absolute;right:149.69999999999982px;top:1128.47px;font-size:26px;line-height:29.042px;color:#202124;font-weight:400;white-space:nowrap;transform:scaleX(0.8409);transform-origin:right top;">60.0%</span><span id="t79" style="position:absolute;left:1293.2px;top:1192.97px;font-size:26px;line-height:29.042px;color:#202124;font-weight:400;white-space:nowrap;transform:scaleX(0.9638);transform-origin:left top;">United Kingdom</span><span id="t80" style="position:absolute;right:970.2px;top:1192.97px;font-size:26px;line-height:29.042px;color:#202124;font-weight:400;white-space:nowrap;transform:scaleX(0.8641);transform-origin:right top;">8 (100.0%)</span><span id="t81" style="position:absolute;right:696.0999999999999px;top:1192.97px;font-size:26px;line-height:29.042px;color:#202124;font-weight:400;white-space:nowrap;transform:scaleX(0.8409);transform-origin:right top;">62.5%</span><span id="t82" style="position:absolute;right:430.4000000000001px;top:1192.97px;font-size:26px;line-height:29.042px;color:#202124;font-weight:400;white-space:nowrap;">3</span><span id="t83" style="position:absolute;right:149.69999999999982px;top:1192.97px;font-size:26px;line-height:29.042px;color:#202124;font-weight:400;white-space:nowrap;transform:scaleX(0.8409);transform-origin:right top;">37.5%</span><span id="t84" style="position:absolute;left:1000.8px;top:1257.97px;font-size:26px;line-height:29.042px;color:#202124;font-weight:700;white-space:nowrap;transform:scaleX(0.9290);transform-origin:left top;">2. Общие установки</span><span id="t85" style="position:absolute;left:1293.2px;top:1257.97px;font-size:26px;line-height:29.042px;color:#202124;font-weight:700;white-space:nowrap;transform:scaleX(0.9105);transform-origin:left top;">Total</span><span id="t86" style="position:absolute;right:970.2px;top:1257.97px;font-size:26px;line-height:29.042px;color:#202124;font-weight:700;white-space:nowrap;transform:scaleX(0.8845);transform-origin:right top;">105 (47.1%)</span><span id="t87" style="position:absolute;right:696.0999999999999px;top:1257.97px;font-size:26px;line-height:29.042px;color:#202124;font-weight:700;white-space:nowrap;">-</span><span id="t88" style="position:absolute;right:430.4000000000001px;top:1257.97px;font-size:26px;line-height:29.042px;color:#202124;font-weight:700;white-space:nowrap;">-</span><span id="t89" style="position:absolute;right:149.69999999999982px;top:1257.97px;font-size:26px;line-height:29.042px;color:#202124;font-weight:700;white-space:nowrap;">-</span><span id="t90" style="position:absolute;left:1293.2px;top:1321.57px;font-size:26px;line-height:29.042px;color:#a8a8a8;font-weight:400;white-space:nowrap;transform:scaleX(0.9616);transform-origin:left top;">Pakistan</span><span id="t91" style="position:absolute;right:970.2px;top:1321.57px;font-size:26px;line-height:29.042px;color:#a8a8a8;font-weight:400;white-space:nowrap;transform:scaleX(0.8641);transform-origin:right top;">26 (76.5%)</span><span id="t92" style="position:absolute;right:696.0999999999999px;top:1321.57px;font-size:26px;line-height:29.042px;color:#a8a8a8;font-weight:400;white-space:nowrap;">-</span><span id="t93" style="position:absolute;right:430.4000000000001px;top:1321.57px;font-size:26px;line-height:29.042px;color:#a8a8a8;font-weight:400;white-space:nowrap;">-</span><span id="t94" style="position:absolute;right:149.69999999999982px;top:1321.57px;font-size:26px;line-height:29.042px;color:#a8a8a8;font-weight:400;white-space:nowrap;">-</span><div style="position:absolute;left:2670.4px;top:785.6px;width:15.4px;height:411.7px;background:#c8c8ca;border-left:1px solid #b8b8b8;border-top:1px solid #b8b8b8;box-sizing:border-box;"></div><div style="position:absolute;left:2720.5px;top:285.8px;width:15.4px;height:1037.8px;background:#c8c8ca;border-left:1px solid #b8b8b8;border-top:1px solid #b8b8b8;box-sizing:border-box;"></div><svg style="position:absolute;left:0px;top:0px;overflow:visible" width="2778" height="1378" viewBox="0 0 2778 1378"><ellipse cx="1175.2" cy="255.2" rx="170.6" ry="56" fill="none" stroke="#ff2200" stroke-width="4.6"/><circle cx="850.5" cy="788.2" r="54" fill="none" stroke="#ff2200" stroke-width="4.7"/><g transform="translate(827.5 754.6) scale(1.83)"><path d="M3 17.25V21h3.75L17.81 9.94l-3.75-3.75L3 17.25zM20.71 7.04c.39-.39.39-1.02 0-1.41l-2.34-2.34c-.39-.39-1.02-.39-1.41 0l-1.83 1.83 3.75 3.75 1.83-1.83z" fill="#757575"/></g></svg><span id="t95" style="position:absolute;left:1265.4px;top:322.505px;font-size:39px;line-height:43.563px;color:#ff2200;font-weight:700;white-space:nowrap;transform:scaleX(0.9479);transform-origin:left top;">1 шаг</span><span id="t96" style="position:absolute;left:699px;top:707.005px;font-size:39px;line-height:43.563px;color:#ff2200;font-weight:700;white-space:nowrap;transform:scaleX(0.9644);transform-origin:left top;">2 шаг</span><div style="position:absolute;left:420px;top:1395px;width:2030px;height:300px;box-shadow:0 0 98px 0 rgba(0,0,0,0.30);"></div>
</body></html>
